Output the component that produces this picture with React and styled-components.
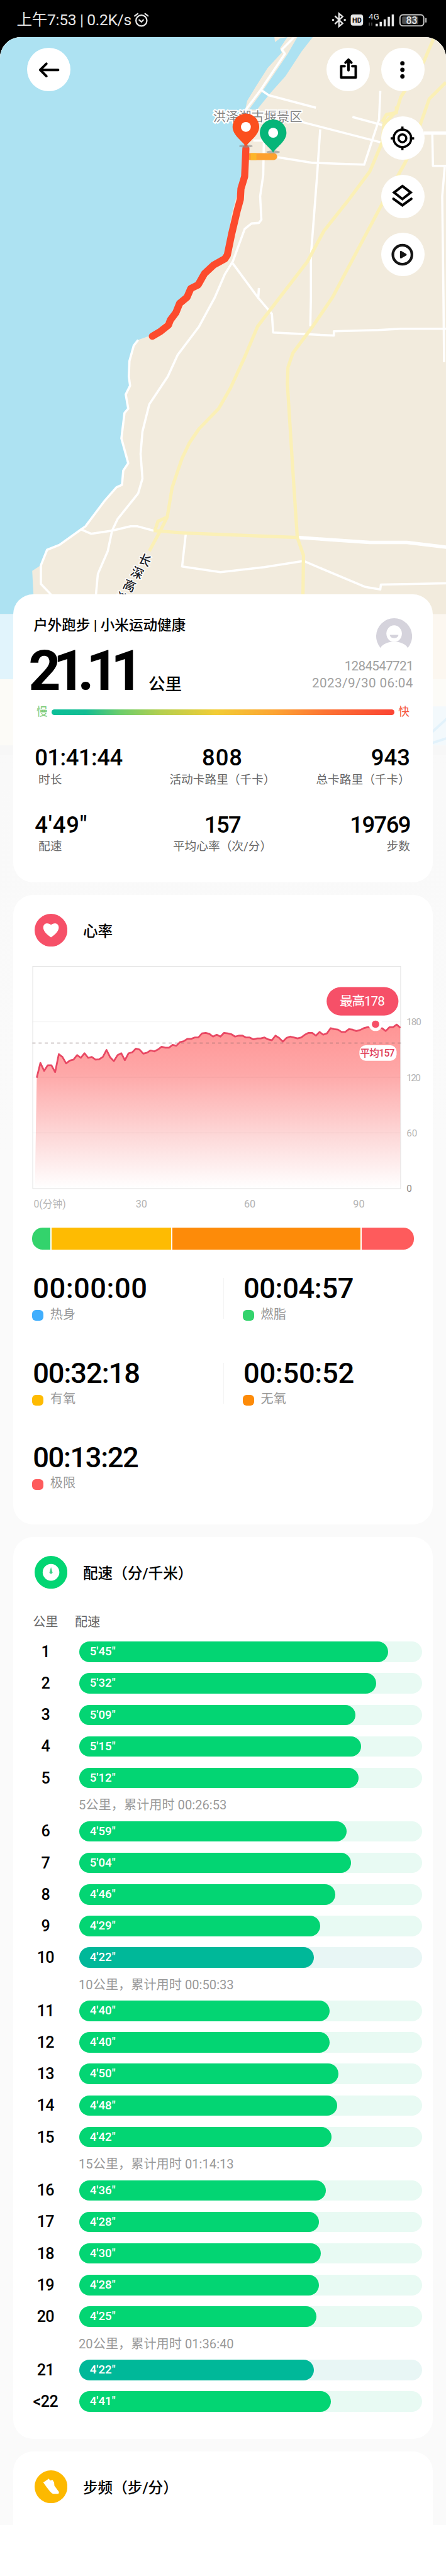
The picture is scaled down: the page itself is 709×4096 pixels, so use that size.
import React from "react";
import styled, { createGlobalStyle } from "styled-components";

const GlobalStyle = createGlobalStyle`
  * {
    box-sizing: border-box;
  }
  html,
  body {
    margin: 0;
    background: #fff;
    overflow: hidden;
  }
`;

const Page = styled.div`
  zoom: 0.98462;
  height: 4160px;
  overflow: hidden;
  background: #000;
  font-family: Roboto, "Noto Sans CJK SC", sans-serif;
  color: #000;
`;

const StatusBar = styled.header`
  display: flex;
  align-items: center;
  justify-content: space-between;
  height: 60px;
  padding: 5px 30px 0 27px;
  color: #e6e6e6;
  font-size: 25px;
  line-height: 30px;
`;

const StatusLeft = styled.div`
  display: flex;
  align-items: center;
  gap: 4px;
  white-space: nowrap;
  letter-spacing: -0.35px;
`;

const Screen = styled.main`
  position: relative;
  height: 4100px;
  background: #fff;
  border-radius: 34px 34px 0 0;
  overflow: hidden;
`;

const Backdrop = styled.div`
  height: 4018px;
  background: #fafafa linear-gradient(#f7f7f7, #fafafa 1800px);
`;

const MapBox = styled.svg`
  display: block;
`;

const Overlay = styled.div`
  position: absolute;
  inset: 0;
`;

const TopControls = styled.nav`
  display: flex;
  gap: 18px;
  height: 95px;
  padding: 17px 35px 0 44px;
`;

const SideControls = styled.nav`
  display: flex;
  flex-direction: column;
  align-items: flex-end;
  gap: 24px;
  height: 805px;
  padding: 33px 35px 0 0;
`;

const RoundButton = styled.button`
  display: flex;
  align-items: center;
  justify-content: center;
  width: 70px;
  height: 70px;
  flex: none;
  padding: 0;
  border: 0;
  border-radius: 50%;
  background: #fff;
  margin-right: ${({ $push }) => ($push ? "auto" : "0")};
`;

const Cards = styled.div`
  display: flex;
  flex-direction: column;
  gap: 20px;
  padding: 0 21px;
`;

const Card = styled.section`
  height: ${({ $height }) => $height}px;
  flex: none;
  border-radius: ${({ $open }) => ($open ? "32px 32px 0 0" : "32px")};
  background: #fff;
`;

const Summary = styled.div`
  display: flex;
  justify-content: space-between;
  height: 171px;
  padding: 33px 32px 0 33px;
`;

const SummaryTitle = styled.div`
  font-size: 23px;
  font-weight: 500;
  line-height: 34px;
  white-space: pre;
  letter-spacing: -0.1px;
`;

const Distance = styled.div`
  display: flex;
  align-items: baseline;
  margin: 5px 0 0 -8px;
  font-weight: 700;
  line-height: 104px;
`;

const DistanceValue = styled.span`
  font-size: 91px;
  letter-spacing: -12.5px;
`;

const DistanceUnit = styled.span`
  margin-left: 21px;
  font-size: 27px;
  font-weight: 500;
`;

const Person = styled.div`
  display: flex;
  flex-direction: column;
  align-items: flex-end;
  padding-top: 3px;
  color: #a0a0a0;
  font-size: 21px;
  line-height: 28px;
`;

const AvatarIcon = styled.svg`
  margin: 0 2px 8px 0;
`;

const PersonLine = styled.div`
  letter-spacing: ${({ $spacing }) => $spacing}px;
`;

const SpeedScale = styled.div`
  display: flex;
  align-items: center;
  gap: 6px;
  height: 38px;
  padding: 0 38px;
  font-size: 18px;
  line-height: 30px;
`;

const SpeedLabel = styled.span`
  color: ${({ color }) => color};
`;

const SpeedTrack = styled.div`
  flex: 1;
  height: 9px;
  border-radius: 5px;
  background: linear-gradient(
    90deg,
    #0abf98 0%,
    #14bd93 10%,
    #6ccd6b 20%,
    #b5cf4f 32%,
    #f2cc35 48%,
    #fca433 65%,
    #fc7333 80%,
    #fb4433 100%
  );
`;

const Stats = styled.div`
  display: grid;
  grid-template-columns: 1fr 1fr 1fr;
  row-gap: 36px;
  padding: 33px 37px 0 35px;
`;

const Stat = styled.div`
  text-align: ${({ $align }) => $align};
  white-space: nowrap;
`;

const StatValue = styled.div`
  font-size: 37px;
  font-weight: 500;
  line-height: 44px;
  letter-spacing: ${({ $spacing }) => $spacing || 0}px;
`;

const StatLabel = styled.div`
  padding-left: ${({ $indent }) => ($indent ? "6px" : "0")};
  color: #666;
  font-size: 19px;
  line-height: 28px;
`;

const CardHead = styled.header`
  display: flex;
  align-items: center;
  gap: 25px;
  height: 114px;
  padding: 0 35px 0;
  font-size: 24px;
  font-weight: 500;
`;

const Chart = styled.svg`
  display: block;
`;

const ZoneBar = styled.div`
  display: flex;
  gap: 2px;
  height: 35px;
  margin: 3px 31px 0;
  border-radius: 17px;
  overflow: hidden;
`;

const ZoneSegment = styled.div`
  flex: ${({ $size }) => $size};
  background: ${({ color }) => color};
`;

const Zones = styled.div`
  display: grid;
  grid-template-columns: 340px 1fr;
  grid-auto-rows: 136.5px;
  padding: 36px 31px 0;
`;

const Zone = styled.div`
  position: relative;
  height: 82px;
`;

const ZoneDivider = styled.i`
  position: absolute;
  left: -31px;
  top: 10px;
  width: 1px;
  height: 66px;
  background: #f4f4f4;
`;

const ZoneTime = styled.div`
  padding-left: 1px;
  font-size: 46px;
  font-weight: 500;
  line-height: 54px;
  letter-spacing: ${({ $spacing }) => $spacing}px;
`;

const ZoneName = styled.div`
  display: flex;
  align-items: center;
  gap: 11px;
  color: #999;
  font-size: 20.5px;
  line-height: 30px;
`;

const Swatch = styled.i`
  width: 18px;
  height: 17px;
  margin-top: 3px;
  border-radius: 6px;
  background: ${({ color }) => color};
`;

const PaceHead = styled.div`
  display: flex;
  gap: 27px;
  height: 55px;
  padding: 9px 32px 0;
  color: #666;
  font-size: 20.5px;
  line-height: 30px;
`;

const PaceRow = styled.div`
  display: flex;
  align-items: center;
  height: 33px;
  margin-bottom: ${({ $last }) => ($last ? "0" : "18px")};
  padding: 0 18px 0 0;
`;

const Kilometre = styled.div`
  width: 107px;
  padding-right: 2px;
  text-align: center;
  font-size: 25.5px;
  font-weight: 500;
  letter-spacing: -0.6px;
`;

const PaceTrack = styled.div`
  flex: 1;
  height: 33px;
  border-radius: 17px;
  background: ${({ $best }) => ($best ? "#e8f6f5" : "#e8faf3")};
`;

const PaceFill = styled.div`
  height: 33px;
  padding-left: 17px;
  border-radius: 17px;
  background: ${({ $best }) => ($best ? "#00b899" : "#03d573")};
  color: #fff;
  font-size: 19px;
  font-weight: 500;
  line-height: 34px;
`;

const PaceNote = styled.div`
  height: 53px;
  padding: 11px 0 0 106px;
  color: #999;
  font-size: 20.5px;
  line-height: 34px;
  white-space: pre;
`;

const ICON = { fill: "none", stroke: "#000", strokeWidth: 4, strokeLinecap: "round", strokeLinejoin: "round" };

const COAST =
  "396,177 397,233 389,290 374,347 363,415 331,437 298,480 289,490 271,517 243,542 223,549 216,558 209,583 208,608 210,623 203,637 207,660 201,667 196,708 207,748 199,760 197,783 188,787 168,810 138,850 131,855 96,880 76,888 66,913";

const WHITE_ROADS = [
  "477,58 455,80 460,87 421,145 397,177",
  "421,145 434,154 510,174",
  "487,197 615,230",
  "569,189 617,202",
  "614,147 612,193 588,266 505,263 448,254",
  "517,209 512,283 502,413 502,480 501,527",
  "409,227 426,227",
  "426,230 425,283 420,317 422,355 418,360 406,361 395,370 376,422 363,443 347,480 321,528 287,573 271,608 241,653 230,697 227,733 230,773 223,797 190,838 181,857 174,890 158,927 154,970",
  "374,423 416,480 439,507 441,537 539,542 539,535 611,533 647,531 722,531",
  "418,465 417,480",
  "698,217 699,268 722,268",
  "718,270 714,317 716,480 717,585",
  "131,855 147,862 181,857 211,850 222,850 248,857",
  "300,862 294,915 356,924 427,916 490,906 590,948 614,952 615,944 722,942",
  "223,549 216,558 209,583 208,608 210,623 203,637 207,660 201,667 196,708 207,748 199,760 197,783 188,787 168,810 138,850 131,855 96,880 76,888 66,913 66,943 84,962",
];

const YELLOW_ROADS = [
  "702,58 684,100 647,157 640,180 620,200 617,230 597,277 565,320 523,373 496,423 452,480 416,527 395,577 372,627 353,660 321,693 306,715 294,740 278,787 270,835 259,857 241,890",
  "640,172 640,182 624,185 617,197",
  "270,835 255,842 250,857",
  "720,133 693,160 680,197 667,235 654,263 615,333 537,480 505,527 473,570 465,593 464,620 473,763 480,868 490,897 489,970",
  "248,857 300,861 480,868",
];

const Pin = ({ x, y, color }) => (
  <g transform={`translate(${x} ${y})`}>
    <ellipse cx="0" cy="31" rx="11" ry="2.5" fill="#8c8c8c" opacity=".6" />
    <path
      d="M0 32C-4 24-21.500 14-21.500 0A21.500 21.500 0 0 1 21.500 0C21.500 14 4 24 0 32Z"
      fill={color}
    />
    <circle r="8" fill="#fff" />
  </g>
);

const RouteMap = () => (
  <MapBox width="720.500" height="1160" viewBox="0 60 720.500 1160">
    <rect y="60" width="722" height="932" fill="#f2ebdd" />
    <polygon points={`0,60 443,60 444,68 452,62 464,60 452,78 455,85 432,110 413,140 399,163 ${COAST} 52,922 54,960 50,992 0,992`} fill="#ade2f2" />
    <polygon points="480,60 505,60 487,83 461,123 437,150 415,177 402,177 422,150 464,88" fill="#ade2f2" />
    <g fill="none" stroke="#fff" strokeWidth="3.600" strokeLinejoin="round">
      {WHITE_ROADS.map((points) => (
        <polyline key={points} points={points} />
      ))}
    </g>
    <g fill="none" stroke="#fff" strokeWidth="5.500">
      <polyline points="684,215 722,215" />
      <polyline points="480,868 597,876 657,876 722,884" />
    </g>
    <g fill="none" stroke="#fbf0b6" strokeWidth="5.300" strokeLinejoin="round">
      {YELLOW_ROADS.map((points) => (
        <polyline key={points} points={points} />
      ))}
    </g>
    <text
      x="344"
      y="196"
      fontSize="20.500"
      fill="#858585"
      stroke="#fff"
      strokeWidth="4"
      paintOrder="stroke"
      textLength="144"
    >
      洪泽湖古堰景区
    </text>
    <g fontSize="20" fontWeight="500" fill="#1d1d25" stroke="#fff" strokeWidth="3" paintOrder="stroke" textAnchor="middle">
      {["长", "深", "高", "速"].map((char, i) => (
        <text key={char} transform={`translate(${234 - i * 12.5} ${905 + i * 20.500}) rotate(24)`} y="7">
          {char}
        </text>
      ))}
    </g>
    <path d="M403 253H442" stroke="#fda02f" strokeWidth="11" strokeLinecap="round" />
    <path d="M405 253H414" stroke="#fcb52a" strokeWidth="11" />
    <polyline
      points="397,240 395,285 389,305 388,322 383,340 374,378 367,412 363,418 345,428 330,442 320,460 308,466 302,480 290,490 284,505 275,517 272,525 258,536 246,543"
      fill="none"
      stroke="#fc4b2d"
      strokeWidth="11.500"
      strokeLinejoin="round"
      strokeLinecap="round"
    />
    <Pin x={397} y={205} color="#fb4f1e" />
    <Pin x={441} y={214.5} color="#06b578" />
    <rect y="992" width="722" height="105" fill="#fcf7f0" />
    <rect y="992" width="40" height="105" fill="#e1f4fc" />
    <rect y="1097" width="722" height="107" fill="#fcfbf7" />
    <path d="M690 1141H722V1204H690Z" fill="#f3f9fc" />
    <path d="M698 1182 722 1160M698 1200 722 1192" stroke="#e2f2fb" strokeWidth="4" />
    <rect y="1204" width="722" height="16" fill="#f7f7f7" />
  </MapBox>
);

const AlarmIcon = () => (
  <svg width="24" height="24" viewBox="0 0 24 24" fill="none" stroke="#e6e6e6" strokeWidth="2.300" strokeLinecap="round">
    <circle cx="12" cy="13" r="8.800" />
    <path d="M8.500 12 12 15 15 12M1.200 5.500 6 1.800M22.800 5.500 18 1.800" />
  </svg>
);

const StatusIcons = () => (
  <svg width="156" height="28" viewBox="535 18 156 28">
    <path d="M541.500 25.500 554 37.500 548 42.500V21.500L554 26.500 541.500 38.500" fill="none" stroke="#e6e6e6" strokeWidth="2.300" />
    <circle cx="538.500" cy="32" r="1.800" fill="#e6e6e6" />
    <circle cx="557.500" cy="32" r="1.800" fill="#e6e6e6" />
    <rect x="567" y="23" width="20" height="18" rx="4" fill="#e6e6e6" />
    <text x="577" y="36.500" fontSize="11" fontWeight="700" textAnchor="middle" fill="#000">HD</text>
    <text x="596" y="31.500" fontSize="13.500" fill="#e6e6e6" textLength="17">4G</text>
    <path d="M597 36V41M601 36V41" stroke="#555" strokeWidth="1.500" />
    <path d="M609 38V42M615.500 35V42M622 31V42M628.500 27V42M635 23V42" stroke="#e6e6e6" strokeWidth="3.600" />
    <rect x="646.500" y="23.500" width="38.500" height="18" rx="5" fill="none" stroke="#c8c8c8" strokeWidth="2" />
    <rect x="650" y="26.500" width="26" height="12" rx="2" fill="#4d4d4d" />
    <path d="M688.500 29V36" stroke="#c8c8c8" strokeWidth="2" />
    <text x="665.500" y="38.300" fontSize="16" fontWeight="500" textAnchor="middle" fill="#e6e6e6">83</text>
  </svg>
);

const BackIcon = () => (
  <svg width="40" height="40" viewBox="0 0 40 40" {...ICON}>
    <path d="M35 20.500H6M16 10.500 6 20.500 16 30.500" />
  </svg>
);

const ShareIcon = () => (
  <svg width="40" height="40" viewBox="0 0 40 40" {...ICON}>
    <path d="M14 14.500H8.500V32.800H32V14.500H26.500M20.300 21V4.500M15.500 8.800 20.300 4 25 8.800" />
  </svg>
);

const MoreIcon = () => (
  <svg width="40" height="40" viewBox="0 0 40 40">
    <circle cx="20" cy="9.800" r="3.500" />
    <circle cx="20" cy="20.300" r="3.500" />
    <circle cx="20" cy="31" r="3.500" />
  </svg>
);

const LocateIcon = () => (
  <svg width="40" height="40" viewBox="0 0 40 40" {...ICON} strokeWidth="3.600" strokeLinecap="butt">
    <circle cx="20" cy="20.300" r="14.200" />
    <circle cx="20" cy="20.300" r="6.300" />
    <path d="M20 1.300V8M20 32.500V39.300M1 20.300H8M32 20.300H39" />
  </svg>
);

const LayersIcon = () => (
  <svg width="40" height="40" viewBox="0 0 40 40" {...ICON}>
    <path d="M20 4 33.500 14.300 20 25 6.500 14.300ZM5.500 24.500 20 35 34.500 24.500" strokeLinejoin="miter" />
  </svg>
);

const PlayIcon = () => (
  <svg width="40" height="40" viewBox="0 0 40 40">
    <circle cx="20" cy="20.300" r="15.400" fill="none" stroke="#151515" strokeWidth="4.300" />
    <path d="M17.500 15.500V25L25.500 20.300Z" fill="#151515" stroke="#151515" strokeWidth="2.800" strokeLinejoin="round" />
  </svg>
);

const Avatar = () => (
  <AvatarIcon width="58" height="58" viewBox="0 0 58 58">
    <path d="M7 50A29 29 0 1 1 51 50C44 37 14 37 7 50Z" fill="#d5d3dc" />
    <ellipse cx="29" cy="27" rx="12.500" ry="13.500" fill="#fff" />
    <path d="M22 29H36C35 36 23 36 22 29Z" fill="#d5d3dc" />
  </AvatarIcon>
);

const HeartIcon = () => (
  <svg width="53" height="53" viewBox="0 0 53 53">
    <circle cx="26.500" cy="26.500" r="26.500" fill="#f65068" />
    <path d="M26.500 38C20 33.500 14 28 14 22 14 14 23.500 14 26.500 18 29.500 14 39 14 39 22 39 28 33 33.500 26.500 38Z" fill="#fff" />
  </svg>
);

const PaceIcon = () => (
  <svg width="53" height="53" viewBox="0 0 53 53">
    <circle cx="26.500" cy="26.500" r="26.500" fill="#03d573" />
    <circle cx="26.500" cy="26.500" r="13.500" fill="#fff" />
    <path d="M26.500 18 29 27A2.600 2.600 0 0 1 24 27Z" fill="#3fd18a" />
  </svg>
);

const StepIcon = () => (
  <svg width="53" height="53" viewBox="0 0 53 53">
    <circle cx="26.500" cy="26.500" r="26.500" fill="#fdb900" />
    <path d="M14 19.500 23 13.500 25 16.500 29 15.500 31.500 19.500 32 25 39.500 35 38.500 38H30C26 37 23 31 20 28Z" fill="#fff" />
  </svg>
);

const HEART_RATE = [
  119.5, 135.5, 127, 133, 133, 125.5, 145, 142, 135, 138, 139, 144, 141, 146, 141, 142, 139, 139.5, 142, 149.5,
  141.5, 137.5, 144, 146, 138.5, 146, 147, 151, 150, 145.5, 146.5, 149, 148, 150, 153, 152, 152, 155, 154, 158,
  159, 161.5, 161.5, 163, 163, 167.5, 168, 167, 164, 166, 164, 168, 167.5, 166.5, 164, 165, 165, 163, 163, 161,
  162, 162, 163, 161, 160, 165, 162.5, 158.5, 162.5, 164, 163, 162, 163, 166, 168, 168, 165, 169, 166, 167.5,
  173, 172, 171.5, 169, 169, 172, 171.5, 170, 171, 173, 174, 174, 174, 173.5, 173, 170, 174, 174, 177, 173.5,
];

const rateY = (bpm) => 375 - bpm * 1.494;

const HeartChart = () => {
  const line = HEART_RATE.map((bpm, i) => `${(38 + i * 5.93).toFixed(1)},${rateY(bpm).toFixed(1)}`).join(" ");
  return (
    <Chart width="678" height="421" viewBox="0 15 678 421">
      <defs>
        <linearGradient id="rate" x1="0" y1="110" x2="0" y2="375" gradientUnits="userSpaceOnUse">
          <stop offset="0" stopColor="#ff9494" />
          <stop offset=".3" stopColor="#fea8a8" />
          <stop offset=".68" stopColor="#fdd8d8" />
          <stop offset="1" stopColor="#fff" />
        </linearGradient>
      </defs>
      <polygon points={`35,375 ${line} 625.500,375`} fill="url(#rate)" />
      <g stroke="#000" strokeOpacity=".05">
        {[60, 120, 180].map((bpm) => (
          <path key={bpm} d={`M31 ${rateY(bpm)}H626`} />
        ))}
      </g>
      <rect x="31.500" y="16.500" width="594" height="359" fill="none" stroke="#e2e2e2" />
      <path d={`M31 ${rateY(157)}H626`} stroke="#7a6464" strokeOpacity=".5" strokeWidth="1.600" strokeDasharray="5 5" />
      <polyline points={line} fill="none" stroke="#e84863" strokeWidth="2.800" strokeLinejoin="round" />
      <circle cx="585" cy="110" r="11" fill="#fff" />
      <circle cx="585" cy="110" r="6" fill="#f65068" />
      <rect x="506" y="50" width="116" height="46" rx="23" fill="#f65068" />
      <text x="527" y="80.500" fontSize="21" fill="#fff" textLength="73">最高178</text>
      <rect x="559" y="144" width="60" height="25" rx="10" fill="#fff" />
      <text x="560" y="162" fontSize="16" fontWeight="500" fill="#e0415c" textLength="56">平均157</text>
      <g fontSize="15.500" fill="#b4b4b4">
        <text x="635" y="111.500" textLength="24">180</text>
        <text x="635" y="201.500" textLength="23">120</text>
        <text x="635" y="291">60</text>
        <text x="635" y="381" fill="#888">0</text>
      </g>
      <g fontSize="16.500" fill="#b4b4b4">
        <text x="33" y="406.500" fontSize="16">0(分钟)</text>
        <text x="207" y="406.500" textAnchor="middle">30</text>
        <text x="382" y="406.500" textAnchor="middle">60</text>
        <text x="558" y="406.500" textAnchor="middle">90</text>
      </g>
    </Chart>
  );
};

const STATS = [
  { value: "01:41:44", label: "时长", align: "left", spacing: -0.5 },
  { value: "808", label: "活动卡路里（千卡）", align: "center", spacing: 1 },
  { value: "943", label: "总卡路里（千卡）", align: "right" },
  { value: "4'49\"", label: "配速", align: "left", spacing: 0.9 },
  { value: "157", label: "平均心率（次/分）", align: "center", spacing: -1.5 },
  { value: "19769", label: "步数", align: "right", spacing: -1.6 },
];

const ZONES = [
  { time: "00:00:00", name: "热身", color: "#40aefd", size: 0, spacing: 0.5 },
  { time: "00:04:57", name: "燃脂", color: "#33d36c", size: 29, spacing: -0.4 },
  { time: "00:32:18", name: "有氧", color: "#febb02", size: 193, spacing: -1.1 },
  { time: "00:50:52", name: "无氧", color: "#fd8b09", size: 304, spacing: -0.3 },
  { time: "00:13:22", name: "极限", color: "#fe5b5c", size: 84, spacing: -1.4 },
];

const PACES = [
  "5'45\"", "5'32\"", "5'09\"", "5'15\"", "5'12\"", "4'59\"", "5'04\"", "4'46\"", "4'29\"", "4'22\"", "4'40\"",
  "4'40\"", "4'50\"", "4'48\"", "4'42\"", "4'36\"", "4'28\"", "4'30\"", "4'28\"", "4'25\"", "4'22\"", "4'41\"",
];

const TOTALS = { 5: "00:26:53", 10: "00:50:33", 15: "01:14:13", 20: "01:36:40" };
const BEST_PACE = "4'22\"";
const SLOWEST = 383;

// a full track is a bit slower than the slowest kilometre
const paceWidth = (pace) => {
  const [minutes, seconds] = pace.replace('"', "").split("'").map(Number);
  return `${((minutes * 60 + seconds) / SLOWEST) * 100}%`;
};

const PaceList = () =>
  PACES.map((pace, i) => {
    const km = i + 1;
    const best = pace === BEST_PACE;
    return (
      <React.Fragment key={km}>
        <PaceRow $last={Boolean(TOTALS[km])}>
          <Kilometre>{km === 22 ? "<22" : km}</Kilometre>
          <PaceTrack $best={best}>
            <PaceFill $best={best} style={{ width: paceWidth(pace) }}>
              {pace}
            </PaceFill>
          </PaceTrack>
        </PaceRow>
        {TOTALS[km] && <PaceNote>{`${km}公里，累计用时 ${TOTALS[km]}`}</PaceNote>}
      </React.Fragment>
    );
  });

const App = () => (
  <Page>
    <GlobalStyle />
    <StatusBar>
      <StatusLeft>
        上午7:53 | 0.2K/s
        <AlarmIcon />
      </StatusLeft>
      <StatusIcons />
    </StatusBar>
    <Screen>
      <Backdrop>
        <RouteMap />
      </Backdrop>
      <Overlay>
        <TopControls>
          <RoundButton $push>
            <BackIcon />
          </RoundButton>
          <RoundButton>
            <ShareIcon />
          </RoundButton>
          <RoundButton>
            <MoreIcon />
          </RoundButton>
        </TopControls>
        <SideControls>
          <RoundButton>
            <LocateIcon />
          </RoundButton>
          <RoundButton>
            <LayersIcon />
          </RoundButton>
          <RoundButton>
            <PlayIcon />
          </RoundButton>
        </SideControls>
        <Cards>
          <Card $height={465}>
            <Summary>
              <div>
                <SummaryTitle>户外跑步 | 小米运动健康</SummaryTitle>
                <Distance>
                  <DistanceValue>21.11</DistanceValue>
                  <DistanceUnit>公里</DistanceUnit>
                </Distance>
              </div>
              <Person>
                <Avatar />
                <PersonLine $spacing={-0.7}>1284547721</PersonLine>
                <PersonLine $spacing={0.4}>2023/9/30 06:04</PersonLine>
              </Person>
            </Summary>
            <SpeedScale>
              <SpeedLabel color="#7ccb7a">慢</SpeedLabel>
              <SpeedTrack />
              <SpeedLabel color="#f5523c">快</SpeedLabel>
            </SpeedScale>
            <Stats>
              {STATS.map(({ value, label, align, spacing }) => (
                <Stat key={label} $align={align}>
                  <StatValue $spacing={spacing}>{value}</StatValue>
                  <StatLabel $indent={align === "left"}>{label}</StatLabel>
                </Stat>
              ))}
            </Stats>
          </Card>
          <Card $height={1017}>
            <CardHead>
              <HeartIcon />
              心率
            </CardHead>
            <HeartChart />
            <ZoneBar>
              {ZONES.filter(({ size }) => size).map(({ name, size, color }) => (
                <ZoneSegment key={name} $size={size} color={color} />
              ))}
            </ZoneBar>
            <Zones>
              {ZONES.map(({ time, name, color, spacing }, i) => (
                <Zone key={name}>
                  {i % 2 === 1 && <ZoneDivider />}
                  <ZoneTime $spacing={spacing}>{time}</ZoneTime>
                  <ZoneName>
                    <Swatch color={color} />
                    {name}
                  </ZoneName>
                </Zone>
              ))}
            </Zones>
          </Card>
          <Card $height={1457}>
            <CardHead>
              <PaceIcon />
              配速（分/千米）
            </CardHead>
            <PaceHead>
              <span>公里</span>
              <span>配速</span>
            </PaceHead>
            <PaceList />
          </Card>
          <Card $height={119} $open>
            <CardHead>
              <StepIcon />
              步频（步/分）
            </CardHead>
          </Card>
        </Cards>
      </Overlay>
    </Screen>
  </Page>
);

export default App;
